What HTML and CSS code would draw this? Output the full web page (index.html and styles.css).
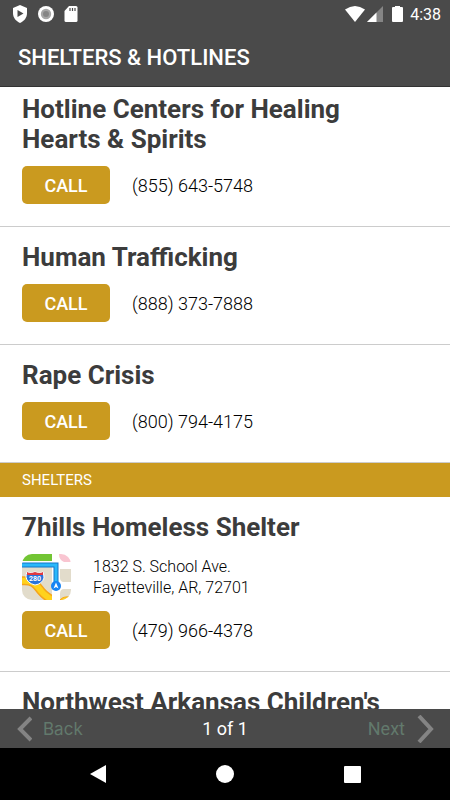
FILE: index.html
```html
<!DOCTYPE html>
<html lang="en">
<head>
    <meta charset="UTF-8">
    <meta name="viewport" content="width=device-width, initial-scale=1.0">
    <title>Shelters &amp; Hotlines</title>
    <link rel="stylesheet" href="styles.css">
</head>
<body>
    <header>
        <div class="status-bar">
            <div class="status-icons">
                <svg width="16" height="18" viewBox="0 0 16 18">
                    <path d="M8 0 L15 3 V8 C15 13 12 16 8 18 C4 16 1 13 1 8 V3 Z" fill="#fff"/>
                    <path d="M5.500 5 L11.500 8.500 L5.500 12 Z" fill="#4a4a4a"/>
                </svg>
                <svg width="16" height="16" viewBox="0 0 16 16">
                    <circle cx="8" cy="8" r="8" fill="#fff"/>
                    <circle cx="8" cy="8" r="5.200" fill="#a6a6a6"/>
                    <circle cx="8" cy="8" r="3" fill="#858585"/>
                </svg>
                <svg width="14" height="16" viewBox="0 0 14 16">
                    <path d="M5 0 H12 Q13.500 0 13.500 1.500 V14.500 Q13.500 16 12 16 H2 Q.5 16 .5 14.500 V5 Z" fill="#fff"/>
                    <path d="M6 2 V5 M8.500 2 V5 M11 2 V5" stroke="#4a4a4a" stroke-width="1.200"/>
                </svg>
            </div>
            <div class="status-right">
                <svg width="20" height="16" viewBox="0 0 20 16">
                    <path d="M0 3.500 Q10 -3.500 20 3.500 L10 16 Z" fill="#fff"/>
                </svg>
                <svg width="16" height="16" viewBox="0 0 16 16">
                    <path d="M0 16 L16 0 V16 Z" fill="#858585"/>
                    <path d="M0 16 L9.500 6.500 V16 Z" fill="#fff"/>
                </svg>
                <svg class="battery" width="11" height="16" viewBox="0 0 11 16">
                    <path d="M3 0 H8 V1 H10 Q11 1 11 2 V15 Q11 16 10 16 H1 Q0 16 0 15 V2 Q0 1 1 1 H3 Z" fill="#fff"/>
                </svg>
                <span class="clock">4:38</span>
            </div>
        </div>
        <h1>SHELTERS &amp; HOTLINES</h1>
    </header>

    <main class="list">
        <section class="entry">
            <h2>Hotline Centers for Healing Hearts &amp; Spirits</h2>
            <div class="phone">
                <button type="button">CALL</button>
                <span>(855) 643-5748</span>
            </div>
        </section>
        <section class="entry">
            <h2>Human Trafficking</h2>
            <div class="phone">
                <button type="button">CALL</button>
                <span>(888) 373-7888</span>
            </div>
        </section>
        <section class="entry">
            <h2>Rape Crisis</h2>
            <div class="phone">
                <button type="button">CALL</button>
                <span>(800) 794-4175</span>
            </div>
        </section>

        <h3 class="divider">SHELTERS</h3>

        <section class="entry">
            <h2>7hills Homeless Shelter</h2>
            <div class="address">
                <svg width="49" height="46" viewBox="0 0 49 46">
                    <clipPath id="mapShape"><rect width="49" height="46" rx="10"/></clipPath>
                    <g clip-path="url(#mapShape)">
                        <rect width="49" height="46" fill="#fff"/>
                        <path d="M0 0 H30 V7 H0 Z" fill="#72c534"/>
                        <path d="M37 0 H49 V8 H42 Q37 6 37 0 Z" fill="#f9c5d1"/>
                        <path d="M0 13 H30 V46 H0 Z M38 15 H49 V28 H41 Q38 27 38 24 Z M38 40 Q38 35 42 35 H49 V46 H38 Z" fill="#e2dccb"/>
                        <path d="M-2 27 C12 25 15 32 19 37 S25 42 31 47" fill="none" stroke="#f5a51c" stroke-width="9"/>
                        <path d="M-2 27 C12 25 15 32 19 37 S25 42 31 47" fill="none" stroke="#ffd21c" stroke-width="6"/>
                        <path d="M30 36 H38 V46 H30 Z" fill="#fff"/>
                        <path d="M38 46 Q41 42 49 43 V46 Z" fill="#ffd21c" stroke="#f5a51c"/>
                        <path d="M-1 11 H34 V30" fill="none" stroke="#1576c9" stroke-width="5"/>
                        <path d="M-1 11 H34 V30" fill="none" stroke="#29b8fa" stroke-width="3"/>
                        <path d="M5 18 Q8 20 13 18 Q18 20 21 18 Q22 21 22 24 Q20 30 13 31 Q5 29 4 23 Q4 20 5 18 Z" fill="#2874dc" stroke="#fff"/>
                        <path d="M5 18 Q8 20 13 18 Q18 20 21 18 V21 H5 Z" fill="#e23b3f"/>
                        <text class="route" x="13" y="27">280</text>
                        <circle cx="34" cy="32" r="5" fill="#1683f3"/>
                        <path d="M34 28.500 L36.500 34.500 L34 33 L31.500 34.500 Z" fill="#fff"/>
                    </g>
                </svg>
                <p>1832 S. School Ave.<br>Fayetteville, AR, 72701</p>
            </div>
            <div class="phone">
                <button type="button">CALL</button>
                <span>(479) 966-4378</span>
            </div>
        </section>
        <section class="entry">
            <h2>Northwest Arkansas Children's</h2>
        </section>
    </main>

    <div class="pager">
        <button type="button" class="back">
            <svg width="16" height="26" viewBox="0 0 16 26">
                <path d="M15 2 L4 13 L15 24" fill="none" stroke="#848484" stroke-width="4"/>
            </svg>
            <span>Back</span>
        </button>
        <span class="count">1 of 1</span>
        <button type="button" class="next">
            <span>Next</span>
            <svg width="18" height="28" viewBox="0 0 18 28">
                <path d="M3 1 L15 14 L3 27" fill="none" stroke="#848484" stroke-width="4"/>
            </svg>
        </button>
    </div>

    <nav class="system-nav">
        <button type="button" aria-label="Back">
            <svg width="16" height="18" viewBox="0 0 16 18"><path d="M16 0 V18 L0 9 Z" fill="#fff"/></svg>
        </button>
        <button type="button" aria-label="Home">
            <svg width="18" height="18" viewBox="0 0 18 18"><circle cx="9" cy="9" r="9" fill="#fff"/></svg>
        </button>
        <button type="button" aria-label="Recent apps">
            <svg width="17" height="17" viewBox="0 0 17 17"><rect width="17" height="17" rx="1" fill="#fff"/></svg>
        </button>
    </nav>
</body>
</html>
```

FILE: styles.css
```css
* {
    box-sizing: border-box;
}

body {
    display: flex;
    flex-direction: column;
    height: 100vh;
    margin: 0;
    font-family: Roboto, "Liberation Sans", sans-serif;
    background-color: #fff;
    color: #000;
}

h1, h2, h3, p {
    margin: 0;
}

svg {
    display: block;
    flex-shrink: 0;
}

button {
    padding: 0;
    border: none;
    background: none;
    font-family: inherit;
    cursor: pointer;
}

header {
    flex-shrink: 0;
    background-color: #4a4a4a;
    color: #fff;
    border-bottom: 1px solid #333;
}

.status-bar {
    display: flex;
    justify-content: space-between;
    align-items: center;
    height: 28px;
    padding: 0 9px 0 12px;
}

.status-icons {
    display: flex;
    align-items: center;
    gap: 10px;
}

.status-right {
    display: flex;
    align-items: center;
    gap: 2px;
}

.battery {
    margin: 0 5px 0 7px;
}

.clock {
    font-size: 16px;
    font-weight: 400;
}

h1 {
    padding: 16px 18px 14px;
    font-size: 22px;
    line-height: 28px;
    font-weight: 500;
}

/* list of hotlines and shelters */
.list {
    flex: 1;
    min-height: 0;
    overflow: hidden;
}

.entry {
    display: flex;
    flex-direction: column;
    gap: 12px;
    padding: 15px 22px 22px;
    border-bottom: 1px solid #ccc;
}

.entry:first-child {
    padding-top: 7px;
}

.entry h2 {
    padding-right: 24px;
    font-size: 26px;
    line-height: 30px;
    font-weight: 700;
    color: #3c3c3c;
}

.phone {
    display: flex;
    align-items: center;
    gap: 22px;
    font-size: 18px;
    font-weight: 300;
}

.phone button {
    width: 88px;
    height: 38px;
    border-radius: 5px;
    background-color: #ca9a1f;
    color: #fff;
    font-size: 18px;
    font-weight: 500;
}

.divider {
    padding: 0 22px;
    background-color: #ca9a1f;
    color: #fff;
    font-size: 15px;
    line-height: 34px;
    font-weight: 400;
}

.address {
    display: flex;
    align-items: center;
    gap: 22px;
    height: 45px;
}

.address p {
    font-size: 16px;
    line-height: 21px;
    font-weight: 300;
}

.route {
    font-size: 7px;
    font-weight: 700;
    fill: #fff;
    text-anchor: middle;
}

/* bottom bars */
.pager {
    display: grid;
    grid-template-columns: 1fr auto 1fr;
    align-items: center;
    flex-shrink: 0;
    height: 39px;
    padding: 0 16px;
    background-color: #4a4a4a;
    color: #fff;
}

.pager button {
    display: flex;
    align-items: center;
    gap: 11px;
    color: #62796c;
    font-size: 18px;
}

.pager .back {
    font-family: Inter, sans-serif;
    font-size: 17px;
}

.pager .next {
    justify-self: end;
}

.count {
    font-size: 18px;
}

.system-nav {
    display: flex;
    justify-content: center;
    align-items: center;
    gap: 110px;
    flex-shrink: 0;
    height: 52px;
    background-color: #000;
}
```
